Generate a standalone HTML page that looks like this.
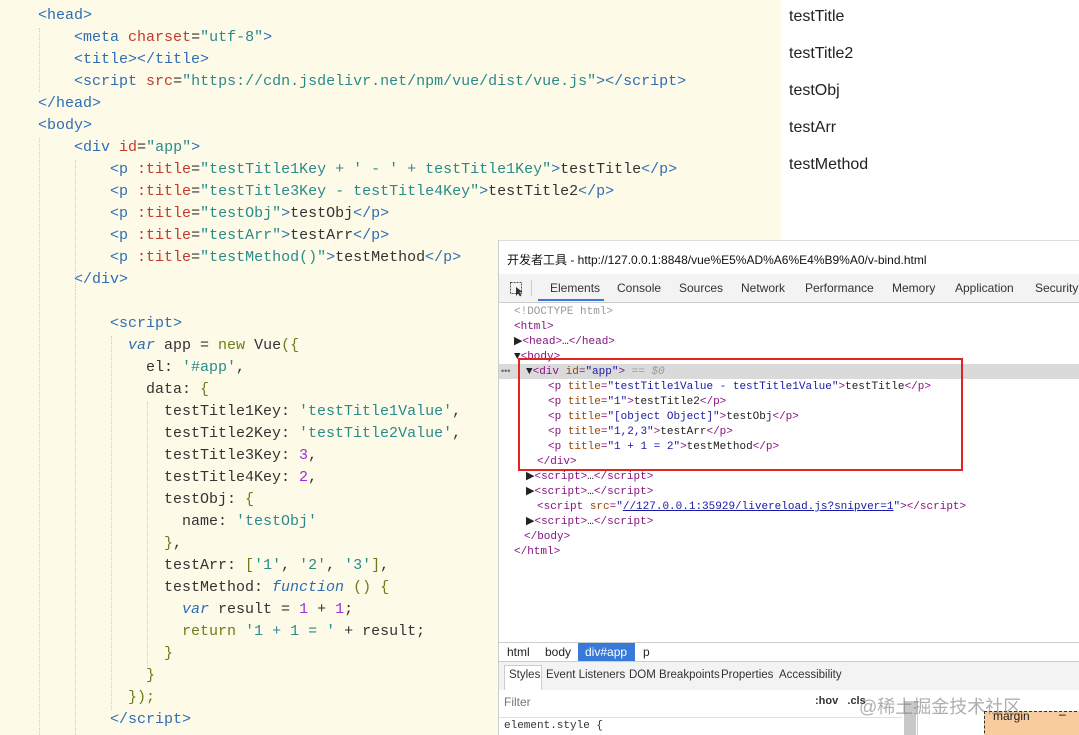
<!DOCTYPE html>
<html style="overflow:hidden"><head><meta charset="utf-8"><style>
html,body{margin:0;width:1079px;height:735px;overflow:hidden}
body{position:relative;background:#fdfbe8;font-family:"Liberation Sans",sans-serif}
pre{margin:0;position:absolute;left:38px;top:5px;font:15px/22px "Liberation Mono",monospace;color:#333}
.t{color:#2e6db5}.a{color:#c0392b}.s{color:#2a8a8a}.k{color:#2e6db5;font-style:italic}.n{color:#9b30d9}.g{color:#6b7d1a}
.guide{position:absolute;border-left:1px dotted #ccc}
#right{position:absolute;left:781px;top:0;width:298px;height:240px;background:#fff;font-size:16px;color:#222}
#right div{position:absolute;left:8px}
#dt{position:absolute;left:498px;top:240px;width:581px;height:495px;background:#fff;border-left:1px solid #ccc;border-top:1px solid #ddd;overflow:hidden}
.abs{position:absolute;white-space:nowrap}
#dom{position:absolute;left:0;top:64px;font:11px/15px "Liberation Mono",monospace;color:#881280;white-space:nowrap}
#dom div{height:15px;padding-left:15px}
.an{color:#994500}.av{color:#1a1aa6}.tx{color:#222}.gr{color:#999}
</style></head><body>
<pre><span class="t">&lt;head&gt;</span>
    <span class="t">&lt;meta</span> <span class="a">charset</span>=<span class="s">"utf-8"</span><span class="t">&gt;</span>
    <span class="t">&lt;title&gt;&lt;/title&gt;</span>
    <span class="t">&lt;script</span> <span class="a">src</span>=<span class="s">"https://cdn.jsdelivr.net/npm/vue/dist/vue.js"</span><span class="t">&gt;&lt;/script&gt;</span>
<span class="t">&lt;/head&gt;</span>
<span class="t">&lt;body&gt;</span>
    <span class="t">&lt;div</span> <span class="a">id</span>=<span class="s">"app"</span><span class="t">&gt;</span>
        <span class="t">&lt;p</span> <span class="a">:title</span>=<span class="s">"testTitle1Key + ' - ' + testTitle1Key"</span><span class="t">&gt;</span>testTitle<span class="t">&lt;/p&gt;</span>
        <span class="t">&lt;p</span> <span class="a">:title</span>=<span class="s">"testTitle3Key - testTitle4Key"</span><span class="t">&gt;</span>testTitle2<span class="t">&lt;/p&gt;</span>
        <span class="t">&lt;p</span> <span class="a">:title</span>=<span class="s">"testObj"</span><span class="t">&gt;</span>testObj<span class="t">&lt;/p&gt;</span>
        <span class="t">&lt;p</span> <span class="a">:title</span>=<span class="s">"testArr"</span><span class="t">&gt;</span>testArr<span class="t">&lt;/p&gt;</span>
        <span class="t">&lt;p</span> <span class="a">:title</span>=<span class="s">"testMethod()"</span><span class="t">&gt;</span>testMethod<span class="t">&lt;/p&gt;</span>
    <span class="t">&lt;/div&gt;</span>

        <span class="t">&lt;script&gt;</span>
          <span class="k">var</span> app = <span class="g">new</span> Vue<span class="g">({</span>
            el: <span class="s">'#app'</span>,
            data: <span class="g">{</span>
              testTitle1Key: <span class="s">'testTitle1Value'</span>,
              testTitle2Key: <span class="s">'testTitle2Value'</span>,
              testTitle3Key: <span class="n">3</span>,
              testTitle4Key: <span class="n">2</span>,
              testObj: <span class="g">{</span>
                name: <span class="s">'testObj'</span>
              <span class="g">}</span>,
              testArr: <span class="g">[</span><span class="s">'1'</span>, <span class="s">'2'</span>, <span class="s">'3'</span><span class="g">]</span>,
              testMethod: <span class="k">function</span> <span class="g">() {</span>
                <span class="k">var</span> result = <span class="n">1</span> + <span class="n">1</span>;
                <span class="g">return</span> <span class="s">'1 + 1 = '</span> + result;
              <span class="g">}</span>
            <span class="g">}</span>
          <span class="g">});</span>
        <span class="t">&lt;/script&gt;</span></pre>
<div class="guide" style="left:39px;top:28px;height:64px"></div>
<div class="guide" style="left:39px;top:138px;height:597px"></div>
<div class="guide" style="left:75px;top:160px;height:130px"></div>
<div class="guide" style="left:75px;top:290px;height:445px"></div>
<div class="guide" style="left:111px;top:336px;height:374px"></div>
<div class="guide" style="left:147px;top:402px;height:264px"></div>

<div id="right">
<div style="top:8px">testTitle</div><div style="top:45px">testTitle2</div><div style="top:82px">testObj</div><div style="top:119px">testArr</div><div style="top:156px">testMethod</div>
</div>

<div id="dt">
<div class="abs" style="left:8px;top:10px;font-size:12px;color:#111;font-family:'Liberation Sans','Noto Sans CJK SC',sans-serif">开发者工具 - http://127.0.0.1:8848/vue%E5%AD%A6%E4%B9%A0/v-bind.html</div>
<div class="abs" style="left:0;top:33px;width:581px;height:28px;background:#f3f3f3;border-bottom:1px solid #ccc;font-size:12px;color:#333">
<svg class="abs" style="left:10px;top:7px" width="16" height="16"><rect x="1.5" y="1.5" width="11" height="11" fill="none" stroke="#555" stroke-dasharray="2 1"/><path d="M7 6 L7 15 L9 12.5 L11 15.5 L12.5 14.5 L10.5 11.5 L13.5 11 Z" fill="#333"/></svg>
<div class="abs" style="left:32px;top:6px;width:1px;height:16px;background:#ccc"></div>
<span class="abs" style="left:51px;top:7px">Elements</span><div class="abs" style="left:39px;top:25px;width:66px;height:2px;background:#3879d9"></div>
<span class="abs" style="left:118px;top:7px">Console</span><span class="abs" style="left:180px;top:7px">Sources</span><span class="abs" style="left:242px;top:7px">Network</span><span class="abs" style="left:306px;top:7px">Performance</span><span class="abs" style="left:393px;top:7px">Memory</span><span class="abs" style="left:456px;top:7px">Application</span><span class="abs" style="left:536px;top:7px">Security</span>
</div>
<div class="abs" style="left:0;top:123px;width:581px;height:15px;background:#dadada"></div>
<div class="abs" style="left:2px;top:125px;font-size:9px;color:#666">•••</div>
<div id="dom">
<div class="gr">&lt;!DOCTYPE html&gt;</div>
<div>&lt;html&gt;</div>
<div><span class="tx">▶</span>&lt;head&gt;<span class="tx">…</span>&lt;/head&gt;</div>
<div><span class="tx">▼</span>&lt;body&gt;</div>
<div style="padding-left:27px"><span class="tx">▼</span>&lt;div <span class="an">id</span>=<span class="av">"app"</span>&gt; <span class="gr">== <i>$0</i></span></div>
<div style="padding-left:49px">&lt;p <span class="an">title</span>=<span class="av">"testTitle1Value - testTitle1Value"</span>&gt;<span class="tx">testTitle</span>&lt;/p&gt;</div>
<div style="padding-left:49px">&lt;p <span class="an">title</span>=<span class="av">"1"</span>&gt;<span class="tx">testTitle2</span>&lt;/p&gt;</div>
<div style="padding-left:49px">&lt;p <span class="an">title</span>=<span class="av">"[object Object]"</span>&gt;<span class="tx">testObj</span>&lt;/p&gt;</div>
<div style="padding-left:49px">&lt;p <span class="an">title</span>=<span class="av">"1,2,3"</span>&gt;<span class="tx">testArr</span>&lt;/p&gt;</div>
<div style="padding-left:49px">&lt;p <span class="an">title</span>=<span class="av">"1 + 1 = 2"</span>&gt;<span class="tx">testMethod</span>&lt;/p&gt;</div>
<div style="padding-left:38px">&lt;/div&gt;</div>
<div style="padding-left:27px"><span class="tx">▶</span>&lt;script&gt;<span class="tx">…</span>&lt;/script&gt;</div>
<div style="padding-left:27px"><span class="tx">▶</span>&lt;script&gt;<span class="tx">…</span>&lt;/script&gt;</div>
<div style="padding-left:38px">&lt;script <span class="an">src</span>=<span class="av">"<u>//127.0.0.1:35929/livereload.js?snipver=1</u>"</span>&gt;&lt;/script&gt;</div>
<div style="padding-left:27px"><span class="tx">▶</span>&lt;script&gt;<span class="tx">…</span>&lt;/script&gt;</div>
<div style="padding-left:25px">&lt;/body&gt;</div>
<div>&lt;/html&gt;</div>
</div>
<div class="abs" style="left:19px;top:117px;width:441px;height:109px;border:2px solid #e02424"></div>
<div class="abs" style="left:0;top:401px;width:581px;height:1px;background:#ccc"></div>
<div class="abs" style="left:0;top:402px;width:581px;height:18px;background:#fff;font-size:12px;color:#222">
<span class="abs" style="left:8px;top:2px">html</span><span class="abs" style="left:46px;top:2px">body</span>
<div class="abs" style="left:79px;top:0;width:57px;height:18px;background:#3879d9;color:#fff"><span class="abs" style="left:7px;top:2px">div#app</span></div>
<span class="abs" style="left:144px;top:2px">p</span></div>
<div class="abs" style="left:0;top:420px;width:581px;height:28px;background:#f3f3f3;border-top:1px solid #ccc;border-bottom:1px solid #ccc;font-size:11.5px;color:#333">
<div class="abs" style="left:5px;top:3px;width:36px;height:24px;background:#fff;border:1px solid #ccc;border-bottom:none"></div>
<span class="abs" style="left:10px;top:7px">Styles</span><span class="abs" style="left:47px;top:7px">Event Listeners</span><span class="abs" style="left:130px;top:7px">DOM Breakpoints</span><span class="abs" style="left:222px;top:7px">Properties</span><span class="abs" style="left:280px;top:7px">Accessibility</span></div>
<div class="abs" style="left:0;top:449px;width:581px;height:46px;background:#fff"></div>
<span class="abs" style="left:5px;top:454px;font-size:12px;color:#777">Filter</span>
<span class="abs" style="left:316px;top:454px;font-size:11px;color:#333;font-weight:bold">:hov&nbsp;&nbsp;&nbsp;.cls</span>
<div class="abs" style="left:0;top:476px;width:403px;height:1px;background:#e0e0e0"></div>
<span class="abs" style="left:5px;top:479px;font:11px 'Liberation Mono',monospace;color:#333">element.style {</span>
<div class="abs" style="left:405px;top:460px;width:12px;height:35px;background:#c8c8c8"></div>
<div class="abs" style="left:418px;top:460px;width:1px;height:35px;background:#ccc"></div>
<div class="abs" style="left:485px;top:470px;width:96px;height:30px;background:#f9cc9d;border:1px dashed #333"></div>
<span class="abs" style="left:494px;top:468px;font-size:12px;color:#222">margin</span><span class="abs" style="left:560px;top:466px;font-size:12px">–</span>
<span class="abs" style="left:360px;top:452px;font-size:18px;color:rgba(120,120,120,.6);font-family:'Liberation Sans','Noto Sans CJK SC',sans-serif">@稀土掘金技术社区</span>
</div>
</body></html>
